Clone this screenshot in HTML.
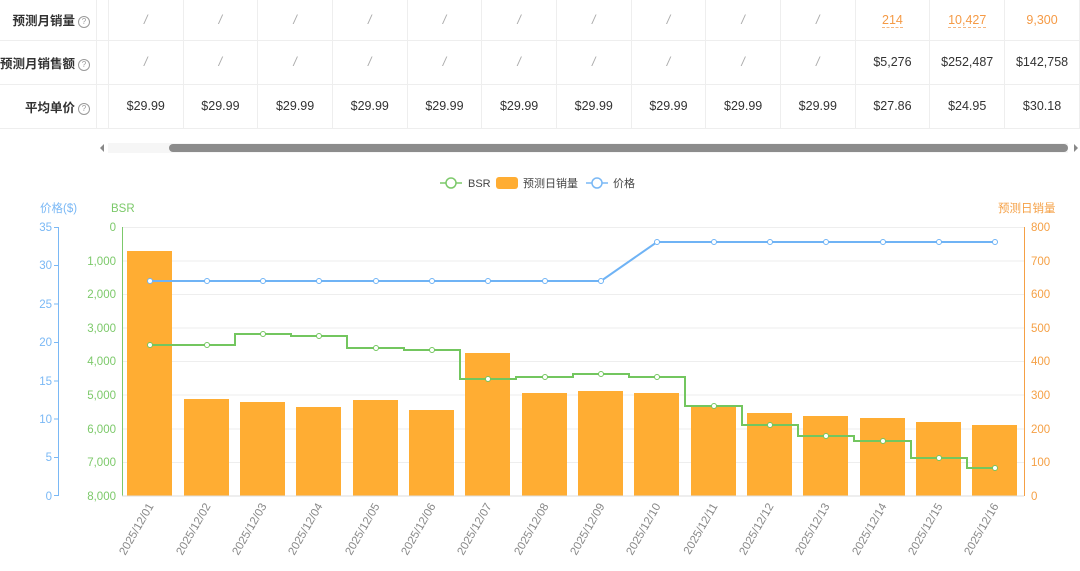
<!DOCTYPE html><html><head><meta charset="utf-8"><style>
body{margin:0;width:1080px;height:571px;background:#fff;font-family:"Liberation Sans","Noto Sans CJK SC",sans-serif;overflow:hidden;position:relative}
table{position:absolute;left:0;top:0;border-collapse:collapse;table-layout:fixed}
td{height:43px;border-bottom:1px solid #eee;border-right:1px solid #eee;text-align:center;font-size:12.5px;color:#333;padding:0;box-sizing:border-box;white-space:nowrap}
tr.r1 td{height:40px}
tr.r2 td,tr.r3 td{height:44px}
td.l{text-align:right;font-weight:bold;padding-right:6px;width:95px;overflow:visible}
td.g{width:12px}
td.d{width:75px}
.q{display:inline-block;width:10px;height:10px;border:1px solid #999;border-radius:50%;font-size:8px;line-height:10px;text-align:center;color:#999;font-weight:normal;vertical-align:1px;margin-left:3px}
.s{color:#aaa;font-style:italic}
.o{color:#f59a45;border-bottom:1px dashed #f5b780}
.o2{color:#f59a45}
</style></head><body>
<table>
<tr class="r1"><td class="l">预测月销量<span class="q">?</span></td><td class="g"></td><td class="d s">/</td><td class="d s">/</td><td class="d s">/</td><td class="d s">/</td><td class="d s">/</td><td class="d s">/</td><td class="d s">/</td><td class="d s">/</td><td class="d s">/</td><td class="d s">/</td><td class="d"><span class="o">214</span></td><td class="d"><span class="o">10,427</span></td><td class="d"><span class="o2">9,300</span></td></tr>
<tr class="r2"><td class="l">预测月销售额<span class="q">?</span></td><td class="g"></td><td class="d s">/</td><td class="d s">/</td><td class="d s">/</td><td class="d s">/</td><td class="d s">/</td><td class="d s">/</td><td class="d s">/</td><td class="d s">/</td><td class="d s">/</td><td class="d s">/</td><td class="d">$5,276</td><td class="d">$252,487</td><td class="d">$142,758</td></tr>
<tr class="r3"><td class="l">平均单价<span class="q">?</span></td><td class="g"></td><td class="d">$29.99</td><td class="d">$29.99</td><td class="d">$29.99</td><td class="d">$29.99</td><td class="d">$29.99</td><td class="d">$29.99</td><td class="d">$29.99</td><td class="d">$29.99</td><td class="d">$29.99</td><td class="d">$29.99</td><td class="d">$27.86</td><td class="d">$24.95</td><td class="d">$30.18</td></tr>
</table>
<svg width="1080" height="571" style="position:absolute;left:0;top:0" font-family="Liberation Sans,Noto Sans CJK SC,sans-serif">
<rect x="108" y="143" width="960" height="10" fill="#f6f6f6"/>
<path d="M104,144 L100,148 L104,152Z" fill="#888"/>
<path d="M1074,144 L1078,148 L1074,152Z" fill="#888"/>
<rect x="169" y="144" width="899" height="8" rx="4" fill="#8c8c8c"/>
<g font-size="11" fill="#444">
<line x1="440" y1="183" x2="462" y2="183" stroke="#7cc96a" stroke-width="1.5"/><circle cx="451" cy="183" r="5" fill="#fff" stroke="#7cc96a" stroke-width="1.5"/><text x="468" y="187">BSR</text>
<rect x="496" y="177" width="22" height="12" rx="3" fill="#ffad33"/><text x="523" y="187">预测日销量</text>
<line x1="586" y1="183" x2="608" y2="183" stroke="#7ab8f5" stroke-width="1.5"/><circle cx="597" cy="183" r="5" fill="#fff" stroke="#7ab8f5" stroke-width="1.5"/><text x="613" y="187">价格</text>
</g>
<g stroke="#eee" stroke-width="1">
<line x1="122" x2="1024" y1="227.5" y2="227.5"/><line x1="122" x2="1024" y1="261" y2="261"/><line x1="122" x2="1024" y1="294.5" y2="294.5"/><line x1="122" x2="1024" y1="328" y2="328"/><line x1="122" x2="1024" y1="361.5" y2="361.5"/><line x1="122" x2="1024" y1="395" y2="395"/><line x1="122" x2="1024" y1="429" y2="429"/><line x1="122" x2="1024" y1="462.5" y2="462.5"/>
</g>
<g font-size="11.5">
<text x="40" y="212" fill="#7ab8f5">价格($)</text>
<text x="111" y="212" fill="#7cc96a">BSR</text>
<text x="998" y="212" fill="#f5a045">预测日销量</text>
<line x1="58.5" y1="227" x2="58.5" y2="496" stroke="#7ab8f5"/>
<g fill="#7ab8f5" text-anchor="end">
<text x="52" y="231">35</text><text x="52" y="269">30</text><text x="52" y="308">25</text><text x="52" y="346">20</text><text x="52" y="385">15</text><text x="52" y="423">10</text><text x="52" y="461">5</text><text x="52" y="500">0</text></g>
<g stroke="#7ab8f5"><line x1="54" x2="58" y1="227.5" y2="227.5"/><line x1="54" x2="58" y1="265.5" y2="265.5"/><line x1="54" x2="58" y1="304" y2="304"/><line x1="54" x2="58" y1="342.5" y2="342.5"/><line x1="54" x2="58" y1="381" y2="381"/><line x1="54" x2="58" y1="419" y2="419"/><line x1="54" x2="58" y1="457.5" y2="457.5"/><line x1="54" x2="58" y1="495.5" y2="495.5"/></g>
<line x1="122.5" y1="227" x2="122.5" y2="496" stroke="#7cc96a"/>
<g fill="#7cc96a" text-anchor="end">
<text x="116" y="231">0</text><text x="116" y="265">1,000</text><text x="116" y="298">2,000</text><text x="116" y="332">3,000</text><text x="116" y="365">4,000</text><text x="116" y="399">5,000</text><text x="116" y="433">6,000</text><text x="116" y="466">7,000</text><text x="116" y="500">8,000</text></g>
<line x1="1024.5" y1="227" x2="1024.5" y2="496" stroke="#f5a045"/>
<g fill="#f5a045"><text x="1031" y="231">800</text><text x="1031" y="265">700</text><text x="1031" y="298">600</text><text x="1031" y="332">500</text><text x="1031" y="365">400</text><text x="1031" y="399">300</text><text x="1031" y="433">200</text><text x="1031" y="466">100</text><text x="1031" y="500">0</text></g>
</g>
<g fill="#ffad33">
<rect x="127" y="251" width="45" height="245"/><rect x="184" y="399" width="45" height="97"/><rect x="240" y="402" width="45" height="94"/><rect x="296" y="407" width="45" height="89"/><rect x="353" y="400" width="45" height="96"/><rect x="409" y="410" width="45" height="86"/><rect x="465" y="353" width="45" height="143"/><rect x="522" y="393" width="45" height="103"/><rect x="578" y="391" width="45" height="105"/><rect x="634" y="393" width="45" height="103"/><rect x="691" y="405" width="45" height="91"/><rect x="747" y="413" width="45" height="83"/><rect x="803" y="416" width="45" height="80"/><rect x="860" y="418" width="45" height="78"/><rect x="916" y="422" width="45" height="74"/><rect x="972" y="425" width="45" height="71"/>
</g>
<line x1="122" x2="1024" y1="496" y2="496" stroke="#ddd"/>
<path d="M150,281 H601 L657,242 H995" fill="none" stroke="#6fb3f5" stroke-width="2"/>
<g fill="#fff" stroke="#6fb3f5" stroke-width="1">
<circle cx="150" cy="281" r="2.5"/><circle cx="207" cy="281" r="2.5"/><circle cx="263" cy="281" r="2.5"/><circle cx="319" cy="281" r="2.5"/><circle cx="376" cy="281" r="2.5"/><circle cx="432" cy="281" r="2.5"/><circle cx="488" cy="281" r="2.5"/><circle cx="545" cy="281" r="2.5"/><circle cx="601" cy="281" r="2.5"/><circle cx="657" cy="242" r="2.5"/><circle cx="714" cy="242" r="2.5"/><circle cx="770" cy="242" r="2.5"/><circle cx="826" cy="242" r="2.5"/><circle cx="883" cy="242" r="2.5"/><circle cx="939" cy="242" r="2.5"/><circle cx="995" cy="242" r="2.5"/>
</g>
<path d="M150,345 H235 V334 H291 V336 H347 V348 H404 V350 H460 V379 H516 V377 H573 V374 H629 V377 H685 V406 H742 V425 H798 V436 H854 V441 H911 V458 H967 V468 H995" fill="none" stroke="#73c65f" stroke-width="2"/>
<g fill="#fff" stroke="#73c65f" stroke-width="1">
<circle cx="150" cy="345" r="2.5"/><circle cx="207" cy="345" r="2.5"/><circle cx="263" cy="334" r="2.5"/><circle cx="319" cy="336" r="2.5"/><circle cx="376" cy="348" r="2.5"/><circle cx="432" cy="350" r="2.5"/><circle cx="488" cy="379" r="2.5"/><circle cx="545" cy="377" r="2.5"/><circle cx="601" cy="374" r="2.5"/><circle cx="657" cy="377" r="2.5"/><circle cx="714" cy="406" r="2.5"/><circle cx="770" cy="425" r="2.5"/><circle cx="826" cy="436" r="2.5"/><circle cx="883" cy="441" r="2.5"/><circle cx="939" cy="458" r="2.5"/><circle cx="995" cy="468" r="2.5"/>
</g>
<g font-size="11.5" fill="#888" text-anchor="end">
<text transform="translate(154,506) rotate(-60)">2025/12/01</text><text transform="translate(211,506) rotate(-60)">2025/12/02</text><text transform="translate(267,506) rotate(-60)">2025/12/03</text><text transform="translate(323,506) rotate(-60)">2025/12/04</text><text transform="translate(380,506) rotate(-60)">2025/12/05</text><text transform="translate(436,506) rotate(-60)">2025/12/06</text><text transform="translate(492,506) rotate(-60)">2025/12/07</text><text transform="translate(549,506) rotate(-60)">2025/12/08</text><text transform="translate(605,506) rotate(-60)">2025/12/09</text><text transform="translate(661,506) rotate(-60)">2025/12/10</text><text transform="translate(718,506) rotate(-60)">2025/12/11</text><text transform="translate(774,506) rotate(-60)">2025/12/12</text><text transform="translate(830,506) rotate(-60)">2025/12/13</text><text transform="translate(887,506) rotate(-60)">2025/12/14</text><text transform="translate(943,506) rotate(-60)">2025/12/15</text><text transform="translate(999,506) rotate(-60)">2025/12/16</text>
</g>
</svg>
</body></html>
